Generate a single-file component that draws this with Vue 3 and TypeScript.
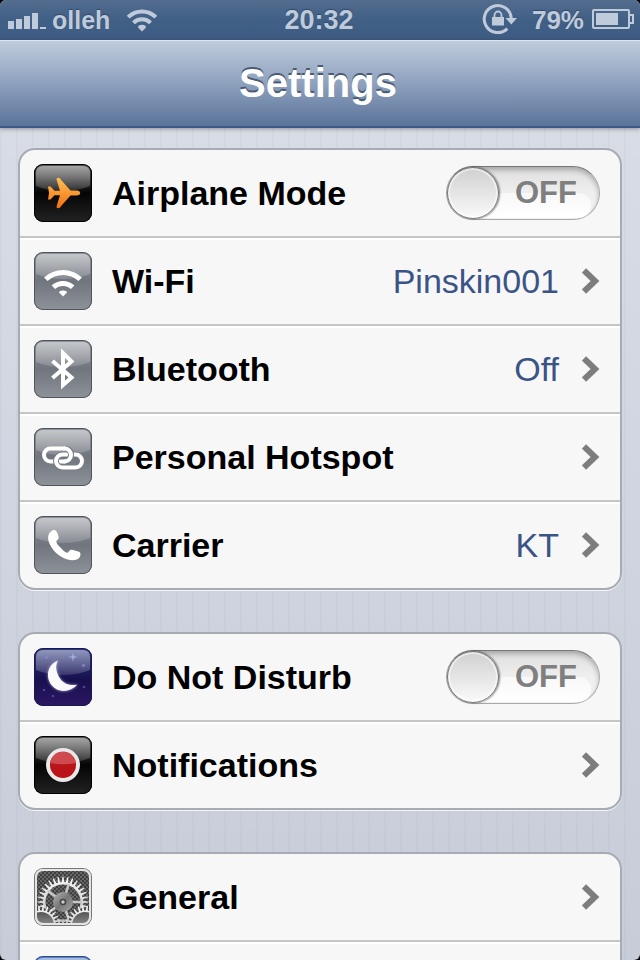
<script setup lang="ts">
import { ref } from 'vue'

type IconName =
  | 'airplane' | 'wifi' | 'bluetooth' | 'hotspot' | 'phone'
  | 'moon' | 'notifications' | 'general' | 'sounds'

interface Row {
  id: string
  icon: IconName
  label: string
  value?: string
  toggle?: boolean
}

const groups: Row[][] = [
  [
    { id: 'airplane', icon: 'airplane', label: 'Airplane Mode', toggle: true },
    { id: 'wifi', icon: 'wifi', label: 'Wi-Fi', value: 'Pinskin001' },
    { id: 'bluetooth', icon: 'bluetooth', label: 'Bluetooth', value: 'Off' },
    { id: 'hotspot', icon: 'hotspot', label: 'Personal Hotspot' },
    { id: 'carrier', icon: 'phone', label: 'Carrier', value: 'KT' },
  ],
  [
    { id: 'dnd', icon: 'moon', label: 'Do Not Disturb', toggle: true },
    { id: 'notifications', icon: 'notifications', label: 'Notifications' },
  ],
  [
    { id: 'general', icon: 'general', label: 'General' },
    { id: 'next', icon: 'sounds', label: '' },
  ],
]

const switches = ref<Record<string, boolean>>({ airplane: false, dnd: false })

/** Outline of a cog with `count` pointed teeth. */
function gear(cx: number, cy: number, inner: number, outer: number, count: number): string {
  const points: string[] = []
  const step = (Math.PI * 2) / count
  const at = (r: number, a: number) =>
    `${(cx + r * Math.cos(a)).toFixed(2)} ${(cy + r * Math.sin(a)).toFixed(2)}`
  for (let i = 0; i < count; i++) {
    const a = i * step
    points.push(at(inner, a - step * 0.3), at(outer, a - step * 0.1), at(outer, a + step * 0.1), at(inner, a + step * 0.3))
  }
  return `M${points.join('L')}Z`
}

const mainGear = gear(29, 34, 20, 25.5, 32)
const leftGear = gear(7, 57, 14.5, 19.5, 26)
const rightGear = gear(51, 57, 14.5, 19.5, 26)
const spokes = [0, 72, 144, 216, 288]
</script>

<template>
  <div class="screen">
    <header class="status">
      <div class="status-side">
        <svg class="bars" width="40" height="18" viewBox="0 0 40 18" aria-hidden="true">
          <path d="M0 9h6v8H0zM8 7h6v10H8zM16 4h6v13h-6zM24 1h6v16h-6zM32 15h6v2h-6z" />
        </svg>
        <span class="operator">olleh</span>
        <svg class="status-wifi" width="32" height="24" viewBox="0 0 32 24" aria-hidden="true">
          <path d="M2.200 9.200a19.500 19.500 0 0 1 27.600 0M7.500 14.800a12 12 0 0 1 17 0" fill="none" stroke="#bfcbda" stroke-width="4" />
          <path d="M16 23.500l-4-4q0-2.800 4-2.800t4 2.800z" />
        </svg>
      </div>
      <time class="clock">20:32</time>
      <div class="status-side status-end">
        <svg class="lock" width="36" height="32" viewBox="0 0 36 32" aria-hidden="true">
          <path d="M25.300 25.600A13.500 13.500 0 1 1 29.200 15" fill="none" stroke="#bfcbda" stroke-width="3" />
          <path d="M23.500 15h11.500l-5.750 6.500zM10 14h12v8.500H10z" />
          <path d="M12.500 14v-2a3.500 3.500 0 0 1 7 0v2" fill="none" stroke="#bfcbda" stroke-width="1.800" />
        </svg>
        <span class="percent">79%</span>
        <svg class="battery" width="42" height="20" viewBox="0 0 42 20" aria-hidden="true">
          <rect x="1" y="1" width="36" height="18" rx="1" fill="none" stroke="#bfcbda" stroke-width="2" />
          <path d="M4 4h22v12H4z" />
          <path d="M38 6h3v8h-3" fill="none" stroke="#bfcbda" stroke-width="2" />
        </svg>
      </div>
    </header>

    <div class="navbar"><h1>Settings</h1></div>

    <main class="content">
      <section v-for="(rows, g) in groups" :key="g" class="card">
        <component
          :is="row.toggle ? 'label' : 'a'"
          v-for="row in rows"
          :key="row.id"
          class="row"
          :href="row.toggle ? undefined : '#' + row.id"
          :for="row.toggle ? row.id : undefined"
        >
          <svg class="icon" :class="'icon-' + row.icon" viewBox="0 0 58 58" aria-hidden="true">
            <defs>
              <linearGradient :id="'shine-' + row.id" x1="0" y1="0" x2="0" y2="1">
                <stop offset="0" stop-color="#fff" stop-opacity=".48" />
                <stop offset="1" stop-color="#fff" stop-opacity=".14" />
              </linearGradient>
              <linearGradient id="flame" x1="0" y1="0" x2="0" y2="1">
                <stop offset="0" stop-color="#ffc053" />
                <stop offset="1" stop-color="#f46f10" />
              </linearGradient>
              <linearGradient id="steel" x1="0" y1="0" x2="0" y2="1">
                <stop offset="0" stop-color="#fafafa" />
                <stop offset="1" stop-color="#b4b4b4" />
              </linearGradient>
              <linearGradient id="hub" x1="0" y1="0" x2="1" y2="1">
                <stop offset="0" stop-color="#b5b5b5" />
                <stop offset=".5" stop-color="#777" />
                <stop offset="1" stop-color="#a8a8a8" />
              </linearGradient>
              <linearGradient id="disc" x1="0" y1="0" x2="0" y2="1">
                <stop offset="0" stop-color="#555" />
                <stop offset=".5" stop-color="#8a8a8a" />
              </linearGradient>
              <pattern id="mesh" width="4" height="4" patternUnits="userSpaceOnUse">
                <path d="M0 0h4v4H0z" fill="#666" />
                <circle cx="1" cy="1" r=".9" fill="#2c2c2c" />
                <circle cx="3" cy="3" r=".9" fill="#2c2c2c" />
              </pattern>
              <clipPath id="plate"><rect x="3" y="3" width="52" height="52" rx="5" /></clipPath>
              <filter id="glow" x="-30%" y="-30%" width="160%" height="160%">
                <feGaussianBlur stdDeviation="1.500" />
              </filter>
            </defs>

            <path
              v-if="row.icon !== 'general'"
              d="M2 9Q2 2 9 2H49Q56 2 56 9V22Q44 27 29 27T2 22Z"
              :fill="`url(#shine-${row.id})`"
            />

            <path
              v-if="row.icon === 'airplane'"
              fill="url(#flame)"
              d="M14 22.500h2.500l4 4.200H26L22.700 16c-.4-1.500.3-2.200 1.500-2.200 1.500 0 2.300 1 3.200 2.400L36.500 26.500h6c2.500 0 3.700 1 3.700 2.500s-1.200 2.500-3.700 2.500h-6l-9.100 10.300c-.9 1.400-1.700 2.400-3.200 2.400-1.200 0-1.900-.7-1.500-2.200L26 31.300h-5.500l-4 4.200H14l1-6.500z"
            />

            <template v-else-if="row.icon === 'wifi'">
              <path d="M11.800 27.300a25 25 0 0 1 34.400 0M19.400 35.300a13.800 13.800 0 0 1 19.200 0" fill="none" stroke="#fff" stroke-width="5" />
              <path d="M29 44.500l-4-4q0-2 4-2t4 2z" fill="#fff" />
            </template>

            <path
              v-else-if="row.icon === 'bluetooth'"
              d="M18.500 21L37.500 37.500 29 45V13l8.500 8.500L18.500 38"
              fill="none" stroke="#fff" stroke-width="4"
            />

            <g v-else-if="row.icon === 'hotspot'" fill="none">
              <rect x="10" y="20.500" width="27" height="13" rx="6.500" stroke="#fff" stroke-width="4" />
              <rect x="22" y="26.500" width="26" height="13" rx="6.500" stroke="#777c85" stroke-width="6" />
              <rect x="22" y="26.500" width="26" height="13" rx="6.500" stroke="#fff" stroke-width="4" />
              <path d="M31.500 20.600Q37 21.500 37 27T32 33.300" stroke="#777c85" stroke-width="6" />
              <path d="M29.500 20.500h1a6.500 6.500 0 0 1 0 13h-1" stroke="#fff" stroke-width="4" />
            </g>

            <path
              v-else-if="row.icon === 'phone'"
              fill="#fff"
              d="M17 15.500c2-1.800 4-1.800 5.300-.2.8 1 2 4 2.400 5.700.3 1.500-.7 2.400-2 3.400-.8.700-.4 2.500 1.300 4.600l5.500 5.700c2 1.800 3.600 2.300 4.500 1.700 1.400-1.800 2-2.900 3.700-2.700 2 .3 5.300 1.300 7.800 2.300 1.500 1 1.300 4-.5 6.300-2.500 2-7 2.500-11.500 1.200C24 40.800 17 33 14.700 25.500c-1.200-4-.4-8 2.300-10z"
            />

            <template v-else-if="row.icon === 'moon'">
              <path d="M24 12.500C13 17 11.500 29 17.500 37S36 45 43.500 36.500C36 38.500 28.500 35.500 25 29S21.500 17 24 12.500z" fill="#aaa4db" filter="url(#glow)" />
              <path d="M24 12.500C13 17 11.500 29 17.500 37S36 45 43.500 36.500C36 38.500 28.500 35.500 25 29S21.500 17 24 12.500z" fill="#fafafa" />
              <path d="M39 4l.8 4.200 4.200.8-4.200.8L39 14l-.8-4.200L34 9l4.200-.8z" fill="#a8b4e8" />
              <g fill="#7f88cb">
                <circle cx="12.500" cy="9.500" r="1.400" /><circle cx="49.500" cy="17.500" r="1.400" />
              </g>
              <g fill="#4b4592">
                <circle cx="50" cy="39" r="1.300" /><circle cx="10" cy="42" r="1.300" /><circle cx="19" cy="48" r="1.300" />
              </g>
            </template>

            <template v-else-if="row.icon === 'notifications'">
              <circle cx="29" cy="29" r="17" fill="#e9e9e9" />
              <circle cx="29" cy="29" r="13" fill="#b8141a" />
              <path d="M16.100 27A13 13 0 0 1 41.900 27Q29 29.500 16.100 27z" fill="#cf4a4e" />
            </template>

            <template v-else-if="row.icon === 'general'">
              <g clip-path="url(#plate)">
                <path d="M3 3h52v52H3z" fill="url(#mesh)" />
                <path :d="mainGear" fill="url(#steel)" />
                <circle cx="29" cy="34" r="17.500" fill="url(#mesh)" />
                <path
                  v-for="angle in spokes" :key="angle"
                  d="M36 34h12" stroke="#c8c8c8" stroke-width="2.500"
                  :transform="`rotate(${angle} 29 34)`"
                />
                <circle cx="29" cy="34" r="10" fill="url(#hub)" />
                <circle cx="29" cy="34" r="2.500" fill="#ccc" stroke="#444" stroke-width="1.500" />
                <circle cx="7" cy="57" r="17" fill="#4a4a4a" />
                <circle cx="51" cy="57" r="17" fill="#4a4a4a" />
                <path :d="leftGear" fill="url(#steel)" />
                <path :d="rightGear" fill="url(#steel)" />
                <circle cx="7" cy="57" r="13" fill="url(#disc)" />
                <circle cx="51" cy="57" r="13" fill="url(#disc)" />
              </g>
              <rect x="2" y="2" width="54" height="54" rx="7" fill="none" stroke="#e4e4e4" stroke-width="2" />
            </template>
          </svg>

          <span class="label">{{ row.label }}</span>

          <span v-if="row.toggle" class="switch">
            <input :id="row.id" v-model="switches[row.id]" type="checkbox" role="switch" />
            <span class="knob"></span>
            <span class="state">{{ switches[row.id] ? 'ON' : 'OFF' }}</span>
          </span>
          <template v-else>
            <span v-if="row.value" class="value">{{ row.value }}</span>
            <svg class="chevron" width="18" height="26" viewBox="0 0 18 26" aria-hidden="true">
              <path d="M2 2.500L13 13 2 23.500" fill="none" stroke="#7d7d7d" stroke-width="6" />
            </svg>
          </template>
        </component>
      </section>
    </main>
  </div>
</template>

<style>
html,
body {
  margin: 0;
  background: #000;
}
</style>

<style scoped>
.screen {
  display: flex;
  flex-direction: column;
  height: 100vh;
  overflow: hidden;
  border-radius: 6px;
  font-family: "Liberation Sans", Arial, Helvetica, sans-serif;
  background:
    repeating-linear-gradient(90deg, rgba(120, 140, 180, 0.06) 0 2px, transparent 2px 16px),
    linear-gradient(#d8dce5 128px, #c8ccd8);
}

.status {
  flex: none;
  display: grid;
  grid-template-columns: 1fr auto 1fr;
  align-items: center;
  height: 40px;
  box-sizing: border-box;
  padding: 0 6px 0 8px;
  color: #bfcbda;
  fill: #bfcbda;
  font-weight: bold;
  text-shadow: 0 -1px 1px #30486a;
  background: linear-gradient(#526c8e, #416086 50%, #3e5c83);
}

.status-side {
  display: flex;
  align-items: center;
}

.status-end {
  justify-content: flex-end;
}

.bars {
  margin: 2px 4px 0 0;
}

.operator {
  font-size: 25px;
}

.status-wifi {
  margin-left: 16px;
}

.clock {
  margin-right: 4px;
  font-size: 27px;
}

.lock {
  margin: 0 14px 2px 0;
}

.percent {
  font-size: 26px;
}

.battery {
  margin: 0 0 2px 8px;
}

.navbar {
  flex: none;
  display: flex;
  align-items: center;
  justify-content: center;
  height: 88px;
  box-sizing: border-box;
  border-top: 1px solid #dce5ef;
  border-bottom: 2px solid #3d5a85;
  background: linear-gradient(#bfccdc, #8c9fbc 52%, #5a749a);
  box-shadow: 0 1px 4px rgba(0, 0, 0, 0.35);
}

h1 {
  margin: 0 4px 2px 0;
  font-size: 40px;
  line-height: 48px;
  color: #fff;
  text-shadow: 0 -2px 0 #4a5a72;
}

.content {
  display: flex;
  flex-direction: column;
  gap: 42px;
  padding: 20px 18px;
}

.card {
  flex: none;
  border: 2px solid #a7abb3;
  border-radius: 17px;
  background: #f7f7f7;
  box-shadow: 0 1px 0 rgba(255, 255, 255, 0.8);
}

.row {
  display: flex;
  align-items: center;
  height: 86px;
  padding: 0 20px 0 14px;
  color: #000;
  text-decoration: none;
  cursor: pointer;
}

.row + .row {
  border-top: 2px solid #c5c5c5;
  box-shadow: inset 0 2px 0 #fff;
}

.row:last-child {
  border-radius: 0 0 15px 15px;
}

.icon {
  flex: none;
  width: 58px;
  height: 58px;
  box-sizing: border-box;
  border-radius: 9px;
  box-shadow: inset 0 0 0 1px #50545c;
  background: linear-gradient(#90949a, #70757e 50%, #8e9299);
}

.icon-airplane,
.icon-notifications {
  background: linear-gradient(#555, #050505 50%, #222);
  box-shadow: inset 0 0 0 1px #000;
}

.icon-moon {
  background: linear-gradient(#29377e, #18104f 55%, #2d1764);
  box-shadow: inset 0 0 0 1px #1a1950;
}

.icon-general {
  background: #ddd;
  box-shadow: inset 0 0 0 1px #777;
}

.icon-sounds {
  background: linear-gradient(#5b83c6, #2457a6);
  box-shadow: inset 0 0 0 1px #2c4b85;
}

.label {
  flex: 1;
  margin-left: 20px;
  font-size: 34px;
  font-weight: bold;
  line-height: 40px;
}

.value {
  font-size: 34px;
  line-height: 40px;
  color: #3a5487;
}

.chevron {
  margin-left: 23px;
}

.switch {
  position: relative;
  flex: none;
  display: flex;
  align-items: center;
  width: 154px;
  height: 54px;
  box-sizing: border-box;
  border: 1px solid #aaa;
  border-top-color: #777;
  border-radius: 27px;
  background: linear-gradient(#dedede, #efefef 50%, #f4f4f4);
  box-shadow: inset 0 3px 5px rgba(0, 0, 0, 0.25);
}

.switch::before {
  content: "";
  position: absolute;
  inset: 26px 8px 1px 26px;
  border-radius: 0 16px 16px 0;
  background: linear-gradient(#f8f8f8, #fff);
}

.switch input {
  position: absolute;
  inset: 0;
  z-index: 1;
  width: 100%;
  height: 100%;
  margin: 0;
  opacity: 0;
  cursor: pointer;
}

.knob {
  position: relative;
  width: 52px;
  height: 52px;
  box-sizing: border-box;
  border: 1px solid #777;
  border-radius: 50%;
  background: linear-gradient(#d0d0d0, #fafafa);
  box-shadow: inset 0 0 0 2px rgba(255, 255, 255, 0.5), 1px 0 2px rgba(0, 0, 0, 0.5);
}

.state {
  position: relative;
  flex: 1;
  text-align: center;
  padding-right: 6px;
  font-size: 31px;
  font-weight: bold;
  color: #7f7f7f;
}

.switch input:checked ~ .knob {
  order: 2;
}
</style>
